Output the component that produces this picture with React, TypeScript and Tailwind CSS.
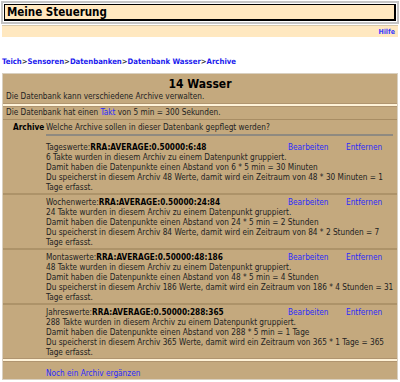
const archives = [
  { label: "Tageswerte:", rra: "RRA:AVERAGE:0.50000:6:48", takte: "6", abstand: "6 * 5 min = 30 Minuten", werte: "48", raum: "48 * 30 Minuten = 1" },
  { label: "Wochenwerte:", rra: "RRA:AVERAGE:0.50000:24:84", takte: "24", abstand: "24 * 5 min = 2 Stunden", werte: "84", raum: "84 * 2 Stunden = 7" },
  { label: "Montaswerte:", rra: "RRA:AVERAGE:0.50000:48:186", takte: "48", abstand: "48 * 5 min = 4 Stunden", werte: "186", raum: "186 * 4 Stunden = 31" },
  { label: "Jahreswerte:", rra: "RRA:AVERAGE:0.50000:288:365", takte: "288", abstand: "288 * 5 min = 1 Tage", werte: "365", raum: "365 * 1 Tage = 365" },
];

export default function App() {
  return (
    <div
      className="h-[382px] w-[400px] overflow-hidden bg-white text-[8.2px] leading-[10px] text-[#222]"
      style={{ fontFamily: '"DejaVu Sans Condensed", "DejaVu Sans", Verdana, sans-serif' }}
    >
      {/* header */}
      <div className="mx-[1px] mt-[1px] border-2 border-[#c4c4c4] p-[1px]">
        <div className="border border-b-2 border-r-2 border-black bg-[#ffe8c0] px-[2px] text-[11.5px] font-bold leading-[14px] text-black">
          Meine Steuerung
        </div>
      </div>
      <div className="mx-[2px] mt-[1px] flex h-[12px] justify-end border-t border-[#d8c8a8] bg-[#ffe8c0] pr-[3px]">
        <a className="text-[7px] font-bold leading-[12px] text-[#3a3aff]">Hilfe</a>
      </div>

      {/* breadcrumb */}
      <div className="mt-[20px] px-[2px] text-[7.7px] font-bold leading-[10px] text-[#1a1aee]">
        <a>Teich</a><span className="text-[#333]">&gt;</span>
        <a>Sensoren</a><span className="text-[#333]">&gt;</span>
        <a>Datenbanken</a><span className="text-[#333]">&gt;</span>
        <a>Datenbank Wasser</a><span className="text-[#333]">&gt;</span>
        <a>Archive</a>
      </div>

      {/* panel */}
      <div className="mx-[2px] mt-[6px] border border-[#d9d0c0] bg-[#c4a97e] pb-[1px]">
        <div className="pt-[3px] text-center text-[12px] font-bold leading-[14px] text-black">14 Wasser</div>
        <div className="px-[3px] pb-[2px]">Die Datenbank kann verschiedene Archive verwalten.</div>
        <div className="h-[4px] border-y border-[#b09570] bg-[#fff3d8]" />
        <div className="border-b border-[#a88d64] px-[3px] pb-[2px]">
          Die Datenbank hat einen <a className="text-[#2a2aff]">Takt</a> von 5 min = 300 Sekunden.
        </div>

        <div className="flex pt-[2px]">
          <div className="w-[43px] shrink-0 pl-[10px] font-bold text-black">Archive</div>
          <div className="flex-1 pr-[4px]">
            <div className="pb-[2px]">Welche Archive sollen in dieser Datenbank gepflegt werden?</div>
            <div className="h-[2px] bg-[#8f8a80]" />
          </div>
        </div>

        {archives.map((a, i) => (
          <div key={a.label} className={i > 0 ? "border-t-2 border-[#ad9369] pt-[2px]" : "pt-[6px]"}>
            <div className="flex pb-[1px]">
              <div className="w-[43px] shrink-0" />
              <div className="flex-1 whitespace-nowrap">
                <div className="flex pr-[9px]">
                  <span className="flex-1">
                    {a.label}
                    <b className="text-black">{a.rra}</b>
                  </span>
                  <a className="w-[58px] text-[#2a2aff]">Bearbeiten</a>
                  <a className="w-[42px] text-[#2a2aff]">Entfernen</a>
                </div>
                <div>{a.takte} Takte wurden in diesem Archiv zu einem Datenpunkt gruppiert.</div>
                <div>Damit haben die Datenpunkte einen Abstand von {a.abstand}</div>
                <div>
                  Du speicherst in diesem Archiv {a.werte} Werte, damit wird ein Zeitraum von {a.raum}
                  <br />
                  Tage erfasst.
                </div>
              </div>
            </div>
          </div>
        ))}

        <div className="h-[4px] border-y border-[#b09570] bg-[#fff3d8]" />
        <div className="flex pt-[6px]">
          <div className="w-[43px] shrink-0" />
          <a className="text-[#2a2aff]">Noch ein Archiv ergänzen</a>
        </div>
      </div>
    </div>
  );
}
